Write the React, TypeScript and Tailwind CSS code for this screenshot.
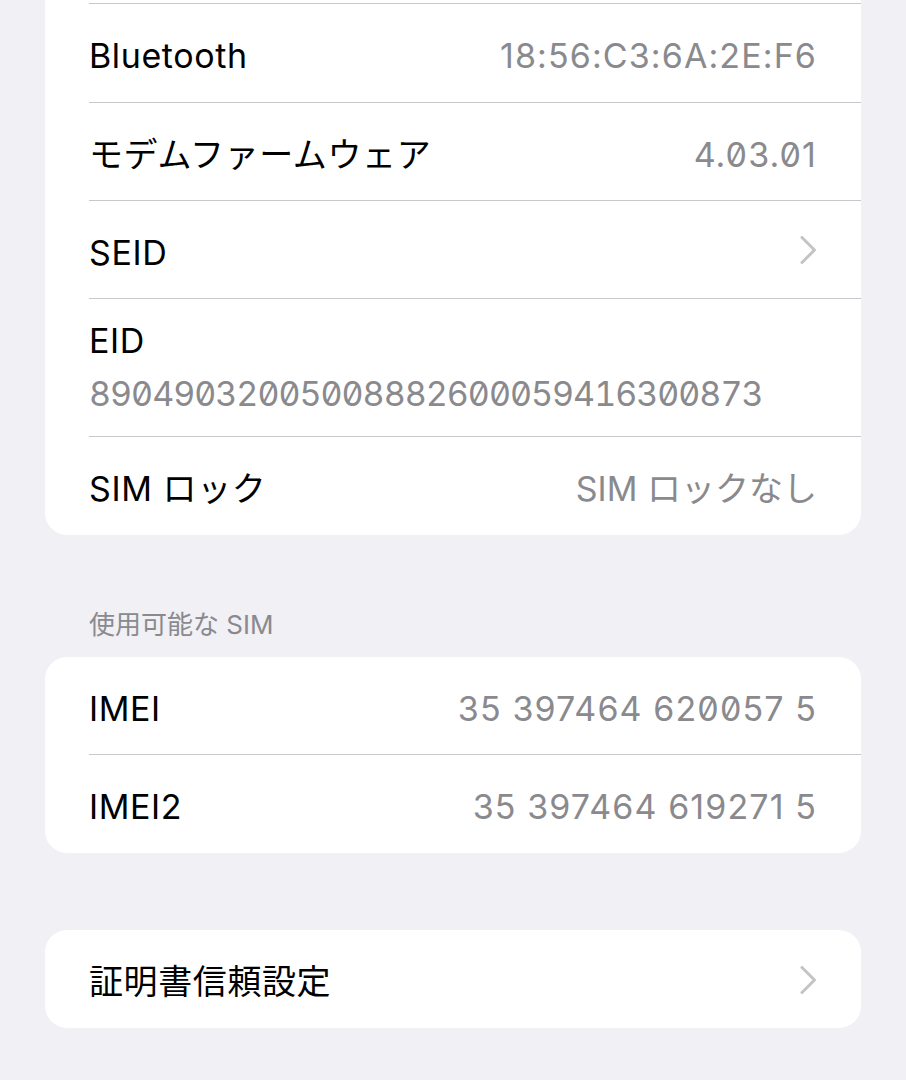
import React from 'react';

const FONT = "font-['Inter','Noto_Sans_CJK_JP',sans-serif]";

const Chevron: React.FC = () => (
  <svg width="18" height="28" viewBox="0 0 18 28" fill="none" className="shrink-0 -mt-[4px]">
    <path d="M3 1.5L15.5 14L3 26.5" stroke="#c4c4c7" strokeWidth="3" strokeLinecap="round" strokeLinejoin="round" />
  </svg>
);

interface RowProps {
  label: string;
  value?: string;
  numeric?: boolean;
  chevron?: boolean;
  border?: boolean;
  h?: string;
}

const Row: React.FC<RowProps> = ({ label, value, numeric = true, chevron, border = true, h = 'h-[98px]' }) => (
  <div className={`${h} ml-[44px] pr-[44px] pt-[5px] flex items-center justify-between ${border ? 'border-b border-[#c8c8cc]' : ''}`}>
    <span className="text-[34px] text-black tracking-[0.6px]">{label}</span>
    {value && (
      <span className={`text-[34px] text-[#8a8a8e] slashed-zero ${numeric ? 'tracking-[1.1px]' : ''}`}>{value}</span>
    )}
    {chevron && <Chevron />}
  </div>
);

export default function App() {
  return (
    <div className={`min-h-[1080px] bg-[#f0f0f5] px-[45px] pb-[52px] ${FONT}`}>
      <div className="bg-white rounded-b-[22px] pt-[3px]">
        <div className="ml-[44px] border-b border-[#c8c8cc]" />
        <Row label="Bluetooth" value="18:56:C3:6A:2E:F6" h="h-[99px]" />
        <Row label="モデムファームウェア" value="4.03.01" />
        <Row label="SEID" chevron />
        <div className="ml-[44px] pt-[21px] pb-[20px] border-b border-[#c8c8cc]">
          <div className="text-[34px] leading-[42px] text-black tracking-[0.6px]">EID</div>
          <div className="mt-[10px] text-[34px] leading-[44px] text-[#8a8a8e] tabular-nums slashed-zero tracking-[-1px]">
            89049032005008882600059416300873
          </div>
        </div>
        <Row label="SIM ロック" value="SIM ロックなし" numeric={false} border={false} />
      </div>

      <div className="mt-[74px] mb-[16px] pl-[44px] text-[26px] leading-[32px] text-[#8a8a8e]">使用可能な SIM</div>

      <div className="bg-white rounded-[22px]">
        <Row label="IMEI" value="35 397464 620057 5" />
        <Row label="IMEI2" value="35 397464 619271 5" border={false} />
      </div>

      <div className="mt-[77px] bg-white rounded-[22px]">
        <Row label="証明書信頼設定" chevron border={false} />
      </div>
    </div>
  );
}
